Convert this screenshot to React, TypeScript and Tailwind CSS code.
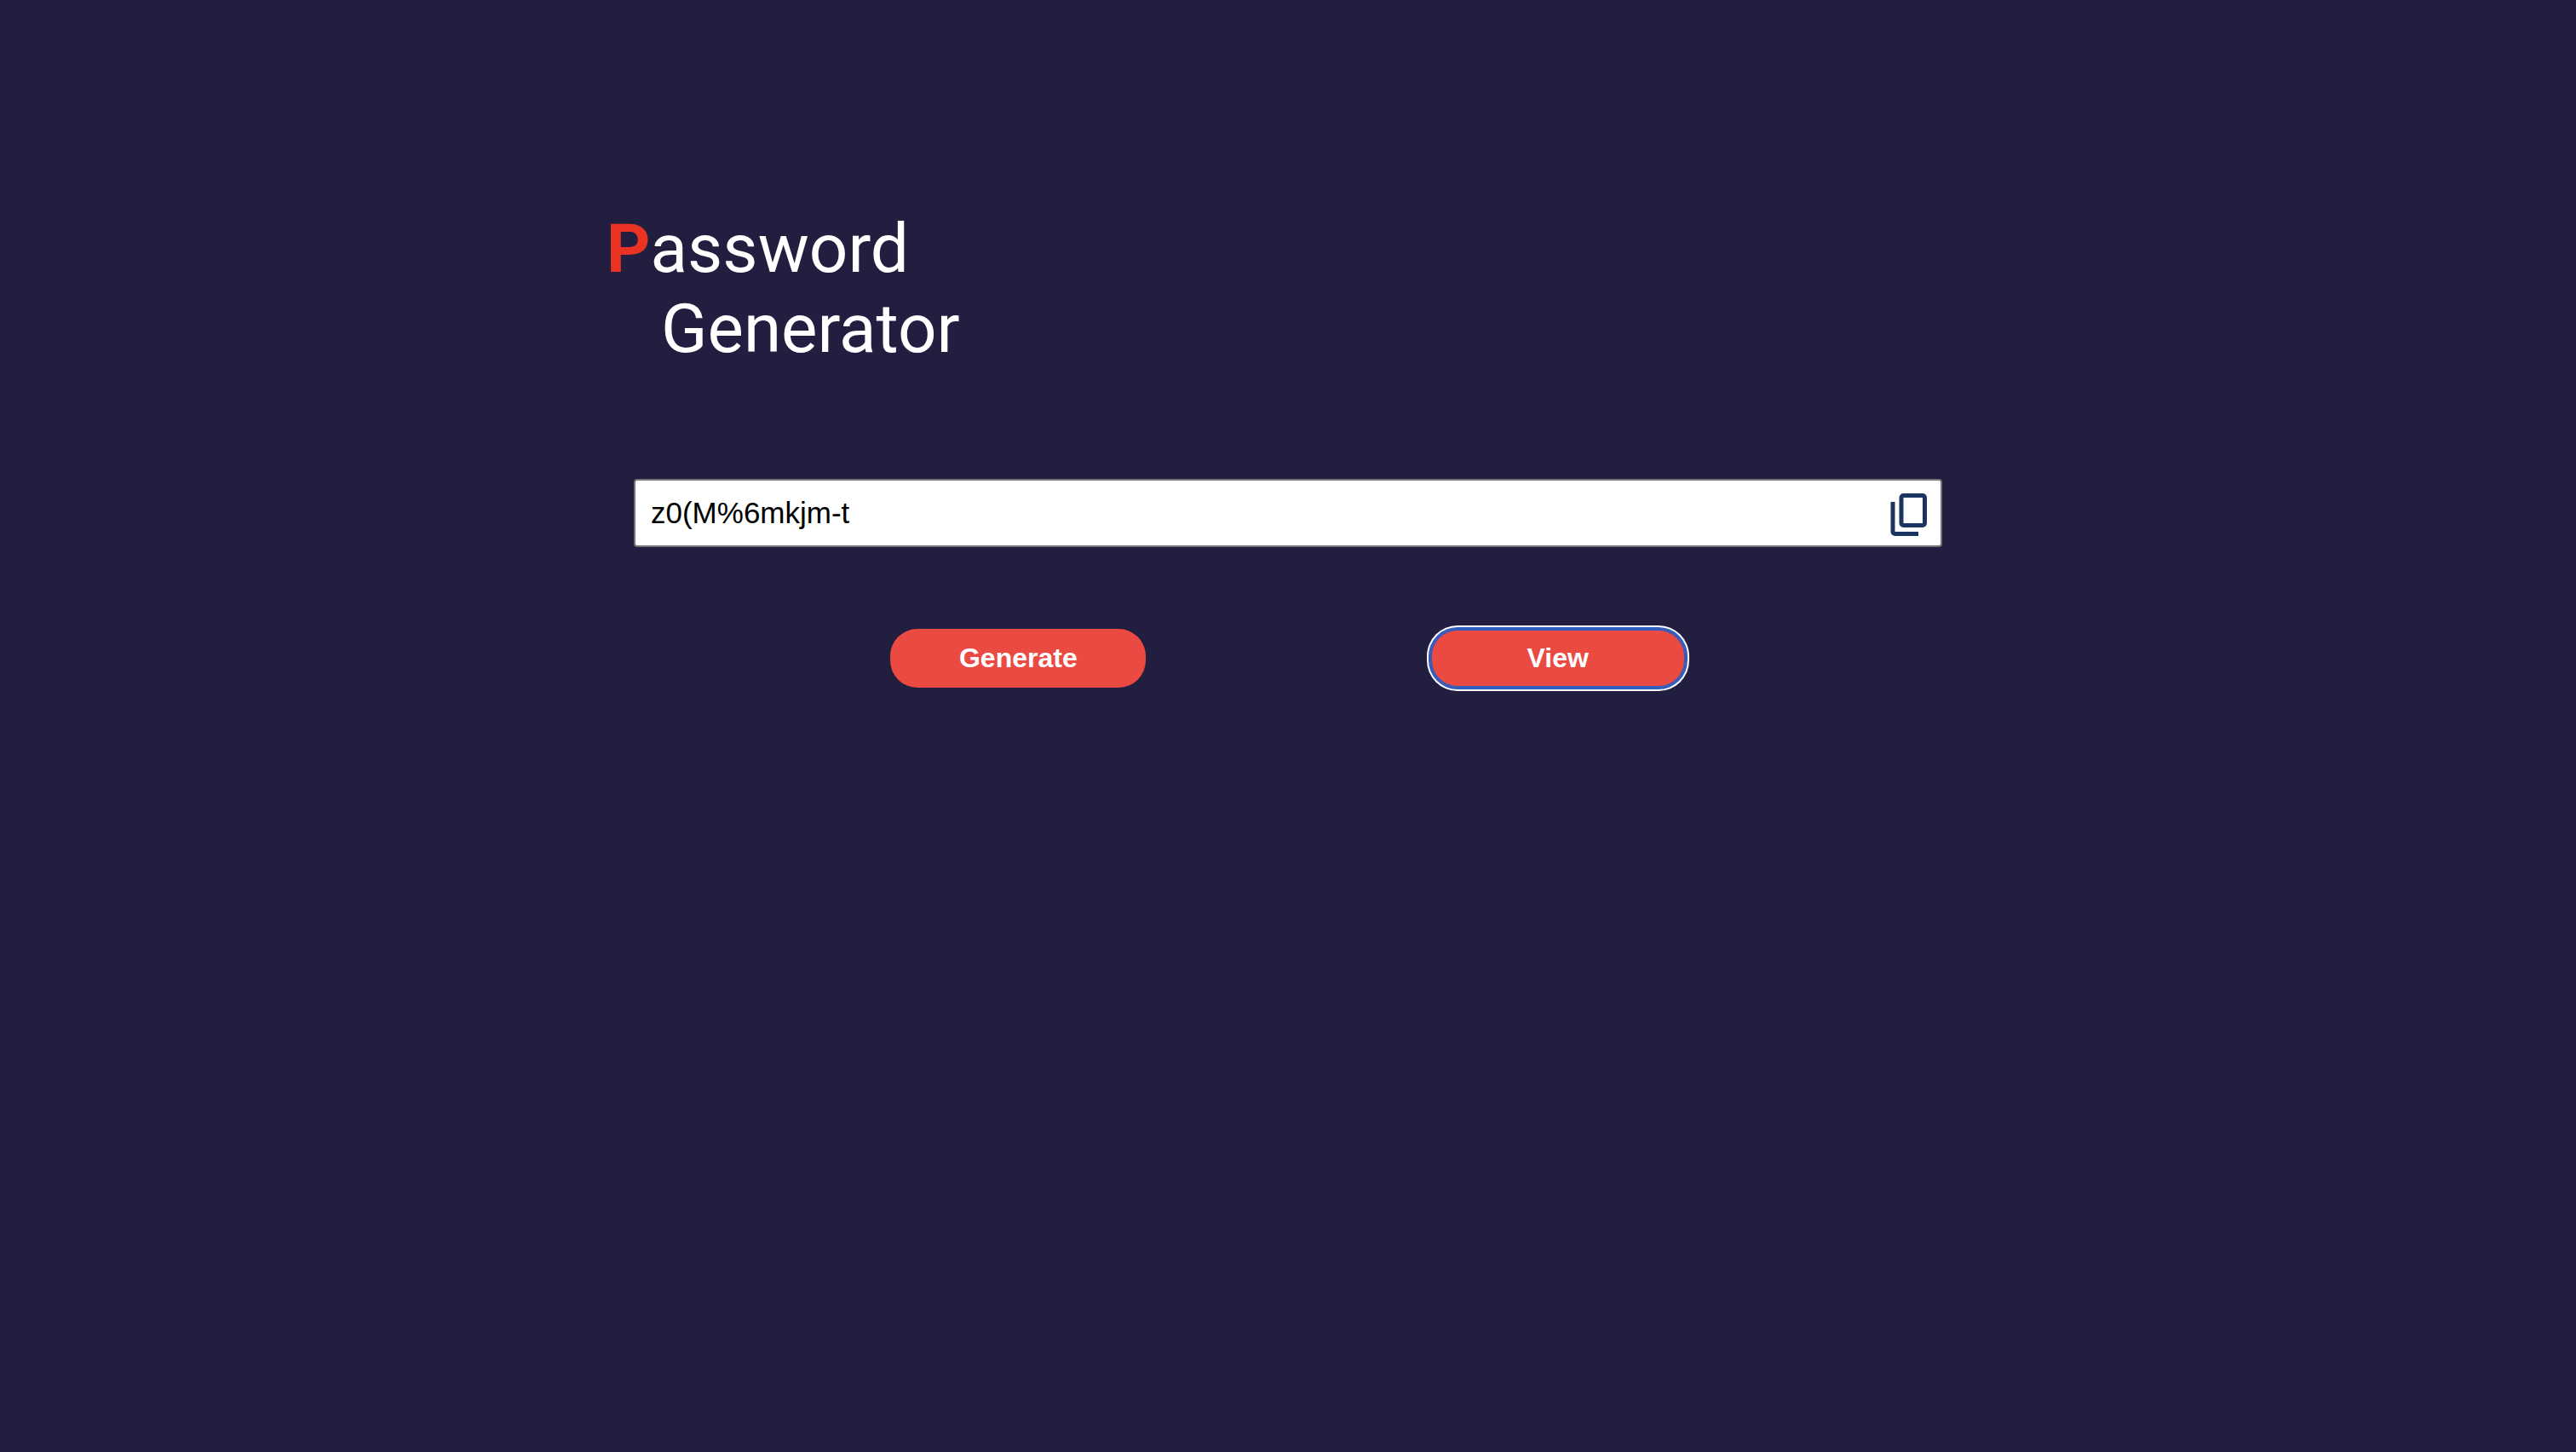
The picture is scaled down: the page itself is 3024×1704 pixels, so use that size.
import { useState } from "react";

function CopyIcon() {
  return (
    <svg viewBox="0 -960 960 960" className="size-[60px] fill-[#1c3460]" aria-hidden="true">
      <path d="M360-240q-33 0-56.5-23.5T280-320v-480q0-33 23.5-56.5T360-880h360q33 0 56.5 23.5T800-800v480q0 33-23.5 56.5T720-240H360Zm0-80h360v-480H360v480ZM200-80q-33 0-56.5-23.5T120-160v-560h80v560h440v80H200Z" />
    </svg>
  );
}

export default function App() {
  const [password, setPassword] = useState("z0(M%6mkjm-t");

  return (
    <div className="min-h-screen bg-[#221e40] px-8 pt-[245px] pb-16">
      <main className="mx-auto max-w-[1600px]">
        <h1 className="font-['Roboto',sans-serif] text-[80px] leading-[94px] font-normal text-white">
          <span className="font-bold text-[#ea3323]">P</span>assword
          <span className="block pl-16">Generator</span>
        </h1>

        <div className="relative mx-8 mt-[129px]">
          <input
            type="text"
            aria-label="Password"
            value={password}
            onChange={(event) => setPassword(event.target.value)}
            className="block h-20 w-full rounded-[4px] border-2 border-[#767676] bg-white pr-20 pl-[18px] font-['Liberation_Sans',sans-serif] text-[35px] text-black outline-none"
          />
          <button
            type="button"
            aria-label="Copy password"
            className="absolute top-3 right-2 cursor-pointer"
            onClick={() => navigator.clipboard?.writeText(password)}
          >
            <CopyIcon />
          </button>
        </div>

        <div className="mt-24 flex justify-evenly font-['Liberation_Sans',sans-serif] text-[32px] leading-[37px] font-bold text-white">
          <button type="button" className="w-[300px] cursor-pointer rounded-[32px] bg-[#ea4a42] py-4">
            Generate
          </button>
          <button
            type="button"
            className="w-[300px] cursor-pointer rounded-[32px] bg-[#ea4a42] py-4 shadow-[inset_0_0_0_2px_#2f5dc0,0_0_0_2px_#2f5dc0,0_0_0_4px_#ffffff]"
          >
            View
          </button>
        </div>
      </main>
    </div>
  );
}
